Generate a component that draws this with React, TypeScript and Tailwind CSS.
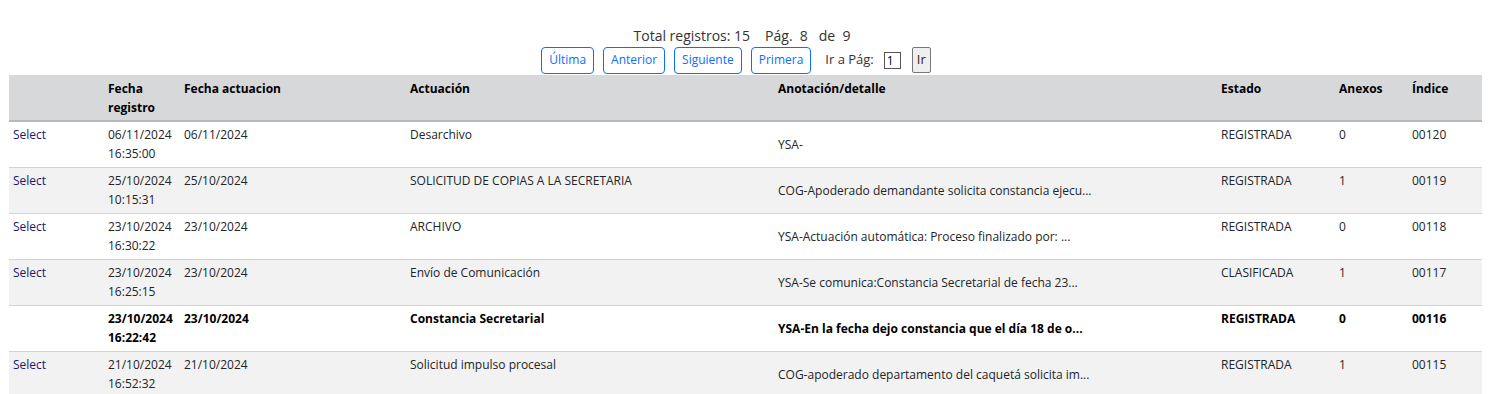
import React from "react";

type Row = {
  select: boolean;
  fechaReg: string;
  hora: string;
  fechaAct: string;
  actuacion: string;
  anotacion: string;
  estado: string;
  anexos: string;
  indice: string;
  bold?: boolean;
};

const rows: Row[] = [
  { select: true, fechaReg: "06/11/2024", hora: "16:35:00", fechaAct: "06/11/2024", actuacion: "Desarchivo", anotacion: "YSA-", estado: "REGISTRADA", anexos: "0", indice: "00120" },
  { select: true, fechaReg: "25/10/2024", hora: "10:15:31", fechaAct: "25/10/2024", actuacion: "SOLICITUD DE COPIAS A LA SECRETARIA", anotacion: "COG-Apoderado demandante solicita constancia ejecu...", estado: "REGISTRADA", anexos: "1", indice: "00119" },
  { select: true, fechaReg: "23/10/2024", hora: "16:30:22", fechaAct: "23/10/2024", actuacion: "ARCHIVO", anotacion: "YSA-Actuación automática: Proceso finalizado por: ...", estado: "REGISTRADA", anexos: "0", indice: "00118" },
  { select: true, fechaReg: "23/10/2024", hora: "16:25:15", fechaAct: "23/10/2024", actuacion: "Envío de Comunicación", anotacion: "YSA-Se comunica:Constancia Secretarial de fecha 23...", estado: "CLASIFICADA", anexos: "1", indice: "00117" },
  { select: false, fechaReg: "23/10/2024", hora: "16:22:42", fechaAct: "23/10/2024", actuacion: "Constancia Secretarial", anotacion: "YSA-En la fecha dejo constancia que el día 18 de o...", estado: "REGISTRADA", anexos: "0", indice: "00116", bold: true },
  { select: true, fechaReg: "21/10/2024", hora: "16:52:32", fechaAct: "21/10/2024", actuacion: "Solicitud impulso procesal", anotacion: "COG-apoderado departamento del caquetá solicita im...", estado: "REGISTRADA", anexos: "1", indice: "00115" },
];

const pagerButtons = ["Última", "Anterior", "Siguiente", "Primera"];

export default function App() {
  return (
    <div
      className="w-[1488px] h-[394px] overflow-hidden bg-white text-[#212529]"
      style={{ fontFamily: '"Segoe UI", "Open Sans", sans-serif' }}
    >
      <div className="pt-[27px] flex flex-col items-center">
        <div className="text-[14px] leading-[18px] text-[#333] flex gap-[15px] pr-[4px]">
          <span>Total registros: 15</span>
          <span>Pág.&nbsp; 8 &nbsp; de&nbsp; 9</span>
        </div>
        <div className="mt-[1px] flex items-center h-[28px] pr-[16px]">
          {pagerButtons.map((b) => (
            <button
              key={b}
              className="h-[27px] px-[7px] mr-[9px] border border-[#0d6efd] rounded-[4px] text-[12px] text-[#0d6efd] bg-white"
            >
              {b}
            </button>
          ))}
          <span className="ml-[5px] text-[13px] text-[#333]">Ir a Pág:</span>
          <span className="ml-[10px] w-[17px] h-[17px] border border-[#555] text-[12px] leading-[15px] pl-[2px] text-black">
            1
          </span>
          <button className="ml-[11px] h-[26px] w-[19px] border border-[#767676] bg-[#efefef] text-[13px] text-[#3a1a0a] rounded-[2px]">
            Ir
          </button>
        </div>
      </div>

      <table className="ml-[9px] mt-[1px] w-[1473px] table-fixed border-collapse text-[12px] leading-[19px]">
        <colgroup>
          <col className="w-[95px]" />
          <col className="w-[76px]" />
          <col className="w-[226px]" />
          <col className="w-[368px]" />
          <col className="w-[443px]" />
          <col className="w-[118px]" />
          <col className="w-[73px]" />
          <col className="w-[74px]" />
        </colgroup>
        <thead>
          <tr className="bg-[#d7d8da] h-[46px] border-b-2 border-[#b9b9b9] text-left align-top font-bold text-black">
            <th className="px-[4px] pt-[4px]"></th>
            <th className="px-[4px] pt-[4px]">Fecha registro</th>
            <th className="px-[4px] pt-[4px]">Fecha actuacion</th>
            <th className="px-[4px] pt-[4px]">Actuación</th>
            <th className="px-[4px] pt-[4px]">Anotación/detalle</th>
            <th className="px-[4px] pt-[4px]">Estado</th>
            <th className="px-[4px] pt-[4px]">Anexos</th>
            <th className="px-[4px] pt-[4px]">Índice</th>
          </tr>
        </thead>
        <tbody>
          {rows.map((r, i) => (
            <tr
              key={r.indice}
              className={`h-[46px] border-b border-[#d3d3d3] align-top ${
                i % 2 === 1 ? "bg-[#f2f2f2]" : "bg-white"
              } ${r.bold ? "font-bold text-black" : ""}`}
            >
              <td className="px-[4px] pt-[3px]">
                {r.select && <a className="text-[#191970] cursor-pointer">Select</a>}
              </td>
              <td className="px-[4px] pt-[3px]">
                {r.fechaReg}
                <br />
                {r.hora}
              </td>
              <td className="px-[4px] pt-[3px]">{r.fechaAct}</td>
              <td className="px-[4px] pt-[3px]">{r.actuacion}</td>
              <td className="px-[4px] align-middle">
                <div className="whitespace-nowrap overflow-hidden">{r.anotacion}</div>
              </td>
              <td className="px-[4px] pt-[3px]">{r.estado}</td>
              <td className="px-[4px] pt-[3px]">{r.anexos}</td>
              <td className="px-[4px] pt-[3px]">{r.indice}</td>
            </tr>
          ))}
        </tbody>
      </table>
    </div>
  );
}
